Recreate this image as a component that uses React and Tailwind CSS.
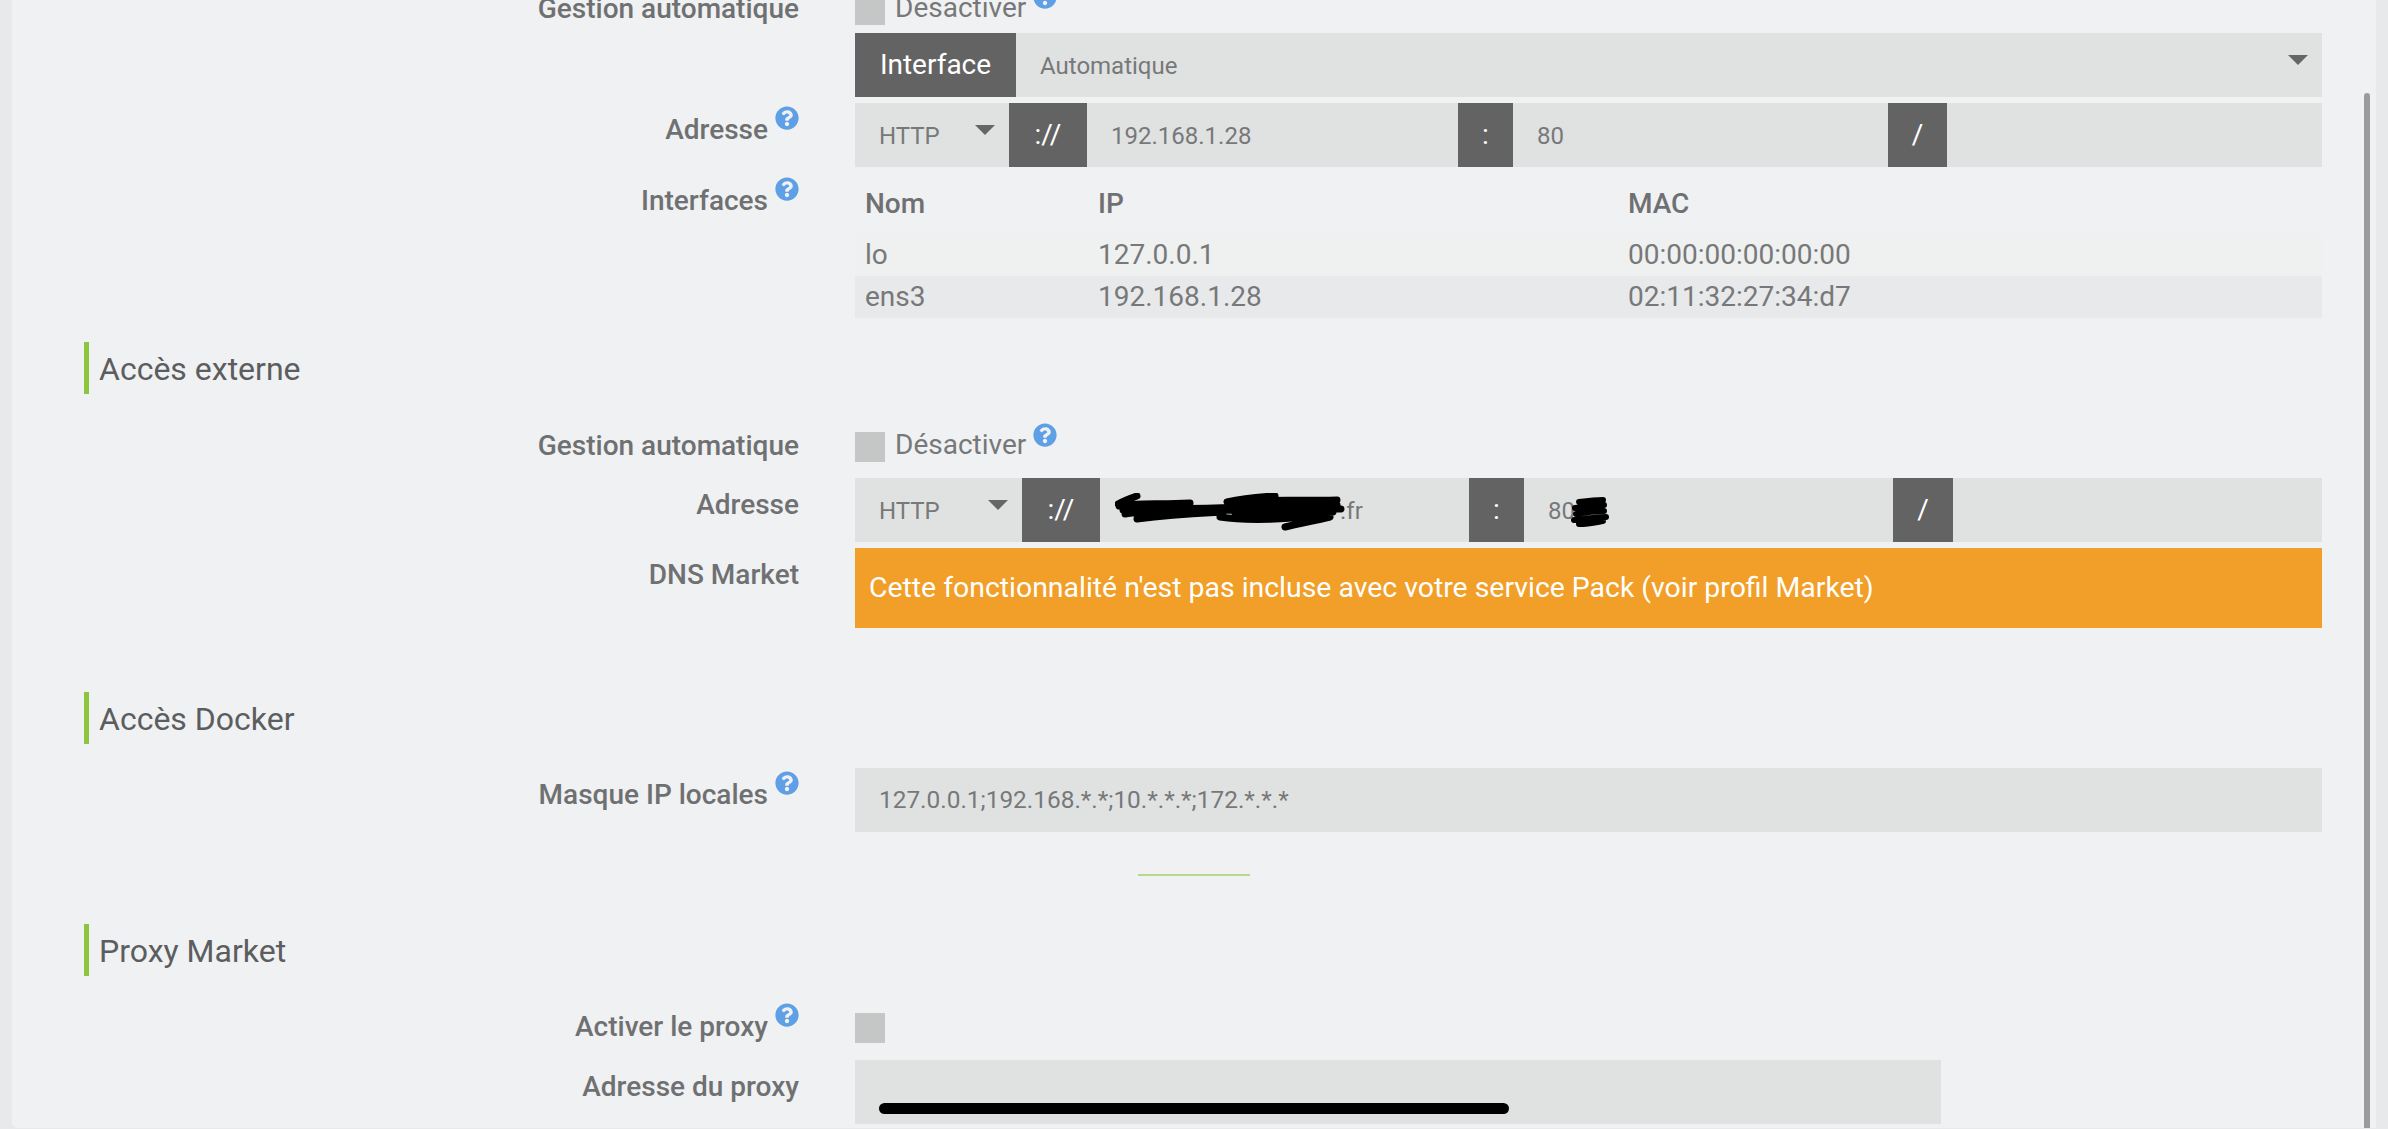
import React from 'react';
import { FaQuestionCircle } from 'react-icons/fa';

const Help = ({ className = '' }) => (
  <span className={`flex shrink-0 ${className}`}>
    <FaQuestionCircle className="text-[24px] text-[#5f9fe6]" />
  </span>
);

const Caret = ({ className }) => (
  <svg className={`absolute w-[20px] h-[10px] ${className}`} viewBox="0 0 20 10"><polygon points="0,0 20,0 10,10" fill="#666666" /></svg>
);

const Label = ({ children, help, pt = 'pt-[8px]' }) => (
  <div className={`w-[787px] shrink-0 flex justify-end items-start ${pt} text-[28px] leading-[38px] font-medium text-[#6f7071]`}>
    <span className="whitespace-nowrap">{children}</span>
    {help && <Help className="ml-[7px] -mt-[5px]" />}
  </div>
);

const Row = ({ label, help, pt, className = '', children }) => (
  <div className={`flex ${className}`}>
    <Label help={help} pt={pt}>{label}</Label>
    <div className="ml-[56px] w-[1467px]">{children}</div>
  </div>
);

const Addon = ({ w, children }) => (
  <div className={`${w} shrink-0 h-full bg-[#636363] text-white text-[28px] flex items-center justify-center`}>{children}</div>
);

const Field = ({ w, children, size = 'text-[24px]' }) => (
  <div className={`${w} h-full relative flex items-center pl-[24px] pt-[1px] ${size} text-[#77787a]`}>{children}</div>
);

const Section = ({ title, className }) => (
  <div className={`ml-[72px] h-[52px] border-l-[5px] border-[#8cc63f] pl-[10px] pt-[2px] flex items-center text-[32px] text-[#5c5d5e] ${className}`}>{title}</div>
);

const Check = () => <div className="w-[30px] h-[30px] bg-[#c5c6c6] shrink-0" />;

const CheckLine = ({ helpClass }) => (
  <div className="flex items-center text-[28px] text-[#77787a]">
    <Check />
    <span className="ml-[10px] -mt-[4px] leading-[38px]">Désactiver</span>
    <Help className={`ml-[7px] ${helpClass}`} />
  </div>
);

export default function App() {
  return (
    <div className="w-[2388px] h-[1129px] overflow-hidden bg-[#e8e9eb] font-['Roboto',sans-serif]">
      <div className="relative ml-[12px] w-[2364px] h-[1128px] rounded-bl-[6px] overflow-hidden bg-[#f0f1f3]">
        <div className="absolute left-[2352px] top-[93px] w-[6px] h-[1100px] rounded-t-[3px] bg-[#9b9b9b]" />

        <div className="-mt-[7px]">
          <Row label="Gestion automatique" pt="-mt-[3px]" className="h-[30px]">
            <CheckLine helpClass="-mt-[26px]" />
          </Row>
        </div>

        <Row label="" className="mt-[10px] h-[64px]">
          <div className="relative h-full flex bg-[#e0e2e1]">
            <div className="w-[161px] h-full bg-[#636363] text-white text-[28px] flex items-center justify-center">Interface</div>
            <Field w="flex-1">Automatique</Field>
            <Caret className="left-[1433px] top-[22px]" />
          </div>
        </Row>

        <Row label="Adresse" help className="mt-[6px] h-[64px]">
          <div className="relative h-full flex bg-[#e0e2e1]">
            <Field w="w-[154px]">HTTP</Field>
            <Caret className="left-[120px] top-[22px]" />
            <Addon w="w-[78px]">://</Addon>
            <Field w="w-[371px]">192.168.1.28</Field>
            <Addon w="w-[55px]">:</Addon>
            <Field w="w-[375px]">80</Field>
            <Addon w="w-[59px]">/</Addon>
          </div>
        </Row>

        <Row label="Interfaces" help pt="pt-[15px]" className="h-[151px]">
          <table className="w-full table-fixed border-collapse text-[28px] text-[#77787a]">
            <thead>
              <tr className="h-[66px] text-left text-[#6f7071]">
                <th className="w-[243px] pl-[10px] pt-[8px] font-medium">Nom</th>
                <th className="w-[530px] pt-[8px] font-medium">IP</th>
                <th className="pt-[8px] font-medium">MAC</th>
              </tr>
            </thead>
            <tbody>
              <tr className="h-[43px] bg-[#eff0f0]">
                <td className="pl-[10px]">lo</td><td>127.0.0.1</td><td>00:00:00:00:00:00</td>
              </tr>
              <tr className="h-[42px] bg-[#e8e9ea]">
                <td className="pl-[10px]">ens3</td><td>192.168.1.28</td><td>02:11:32:27:34:d7</td>
              </tr>
            </tbody>
          </table>
        </Row>

        <Section title="Accès externe" className="mt-[24px]" />

        <Row label="Gestion automatique" pt="-mt-[3px]" className="mt-[36px] h-[30px]">
          <CheckLine helpClass="-mt-[24px]" />
        </Row>

        <Row label="Adresse" className="mt-[18px] h-[64px]">
          <div className="relative h-full flex bg-[#e0e2e1]">
            <Field w="w-[167px]">HTTP</Field>
            <Caret className="left-[133px] top-[22px]" />
            <Addon w="w-[78px]">://</Addon>
            <Field w="w-[369px]">
              <span className="ml-[216px]">.fr</span>
              <svg className="absolute left-[15px] top-[15px] w-[230px] h-[38px]" viewBox="0 0 230 38" fill="none" stroke="#000" strokeLinecap="round">
                <path d="M3 11C10 7 16 5 22 3M4 13C30 9 40 12 75 10M112 9C125 6 140 4 160 3M130 9C150 6 175 8 222 7M8 17C50 13 90 18 130 13C160 10 190 10 222 12M10 21C45 15 80 20 110 17C140 18 180 15 226 16M22 26C60 21 90 20 108 19M105 24C130 28 175 27 212 21M120 20C150 22 190 20 218 19M170 34C185 30 200 28 215 24" strokeWidth="7" />
              </svg>
            </Field>
            <Addon w="w-[55px]">:</Addon>
            <Field w="w-[369px]">
              80
              <svg className="absolute left-[47px] top-[19px] w-[38px] h-[30px]" viewBox="0 0 38 30" fill="none" stroke="#000" strokeLinecap="round">
                <path d="M8 5C16 4 24 3 32 3M4 11C16 10 26 8 33 8M5 17C16 15 26 14 33 14M3 23C14 22 26 20 35 20M8 27C18 27 26 25 32 24" strokeWidth="6" />
              </svg>
            </Field>
            <Addon w="w-[60px]">/</Addon>
          </div>
        </Row>

        <Row label="DNS Market" className="mt-[6px] h-[80px]">
          <div className="h-full bg-[#f19f28] text-white text-[28.4px] flex items-center pl-[14px] pt-[1px]">
            Cette fonctionnalité n'est pas incluse avec votre service Pack (voir profil Market)
          </div>
        </Row>

        <Section title="Accès Docker" className="mt-[64px]" />

        <Row label="Masque IP locales" help className="mt-[24px] h-[64px]">
          <div className="h-full bg-[#e0e2e1]">
            <Field w="w-full" size="text-[24.4px]">127.0.0.1;192.168.*.*;10.*.*.*;172.*.*.*</Field>
          </div>
        </Row>

        <div className="ml-[1126px] mt-[42px] w-[112px] h-[2px] bg-[#b9d98a]" />

        <Section title="Proxy Market" className="mt-[48px]" />

        <Row label="Activer le proxy" help pt="-mt-[5px]" className="mt-[37px] h-[30px]">
          <Check />
        </Row>

        <Row label="Adresse du proxy" className="mt-[17px] h-[64px]">
          <div className="relative w-[1086px] h-full bg-[#e0e2e1]">
            <div className="absolute left-[24px] top-[43px] w-[630px] h-[11px] rounded-full bg-black" />
          </div>
        </Row>
      </div>
    </div>
  );
}
